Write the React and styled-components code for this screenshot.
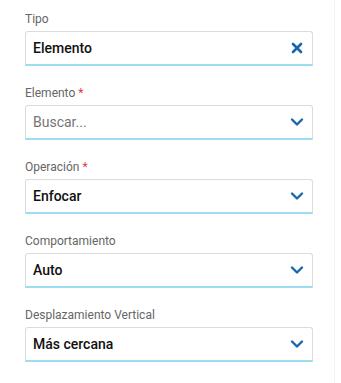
import React from "react";
import styled, { createGlobalStyle } from "styled-components";

const Global = createGlobalStyle`
  html, body { margin: 0; padding: 0; background: #fff; }
  body { font-family: Roboto, "Noto Sans", Arial, sans-serif; }
`;

const Panel = styled.div`
  width: 335px;
  min-height: 383px;
  box-sizing: border-box;
  border-right: 1px solid #f2f2f2;
  padding: 12px 0 0 25px;
  display: flex;
  flex-direction: column;
`;

const Field = styled.div`
  width: 288px;
  display: flex;
  flex-direction: column;
  margin-bottom: 20px;
`;

const Label = styled.label`
  font-size: 12px;
  line-height: 14px;
  color: #666;
  margin-bottom: 5px;
`;

const Req = styled.span`
  color: #e8383d;
  margin-left: 3px;
  font-size: 12px;
`;

const Box = styled.div`
  height: 35px;
  box-sizing: border-box;
  border: 1px solid #dcdcdc;
  border-bottom: 2px solid #9ddcf2;
  border-radius: 3px 3px 0 0;
  display: flex;
  align-items: center;
  padding: 0 8px 0 7px;
  background: #fff;
`;

const Value = styled.span`
  flex: 1;
  font-size: 14px;
  font-weight: ${(p) => (p.$placeholder ? 400 : 500)};
  color: ${(p) => (p.$placeholder ? "#757575" : "#111")};
`;

const Icon = styled.svg`
  width: 14px;
  height: 14px;
  flex: none;
`;

const Chevron = () => (
  <Icon viewBox="0 0 14 14">
    <path d="M2 4.5 L7 9.5 L12 4.5" fill="none" stroke="#1767ae" strokeWidth="2.4" strokeLinecap="round" strokeLinejoin="round" />
  </Icon>
);

const Clear = () => (
  <Icon viewBox="0 0 14 14">
    <path d="M3 3 L11 11 M11 3 L3 11" fill="none" stroke="#1767ae" strokeWidth="2.6" strokeLinecap="round" />
  </Icon>
);

const fields = [
  { label: "Tipo", value: "Elemento", icon: "clear" },
  { label: "Elemento", required: true, value: "Buscar...", placeholder: true },
  { label: "Operación", required: true, value: "Enfocar" },
  { label: "Comportamiento", value: "Auto" },
  { label: "Desplazamiento Vertical", value: "Más cercana" },
];

export default function App() {
  return (
    <>
      <Global />
      <Panel>
        {fields.map((f) => (
          <Field key={f.label}>
            <Label>
              {f.label}
              {f.required && <Req>*</Req>}
            </Label>
            <Box>
              <Value $placeholder={f.placeholder}>{f.value}</Value>
              {f.icon === "clear" ? <Clear /> : <Chevron />}
            </Box>
          </Field>
        ))}
      </Panel>
    </>
  );
}
